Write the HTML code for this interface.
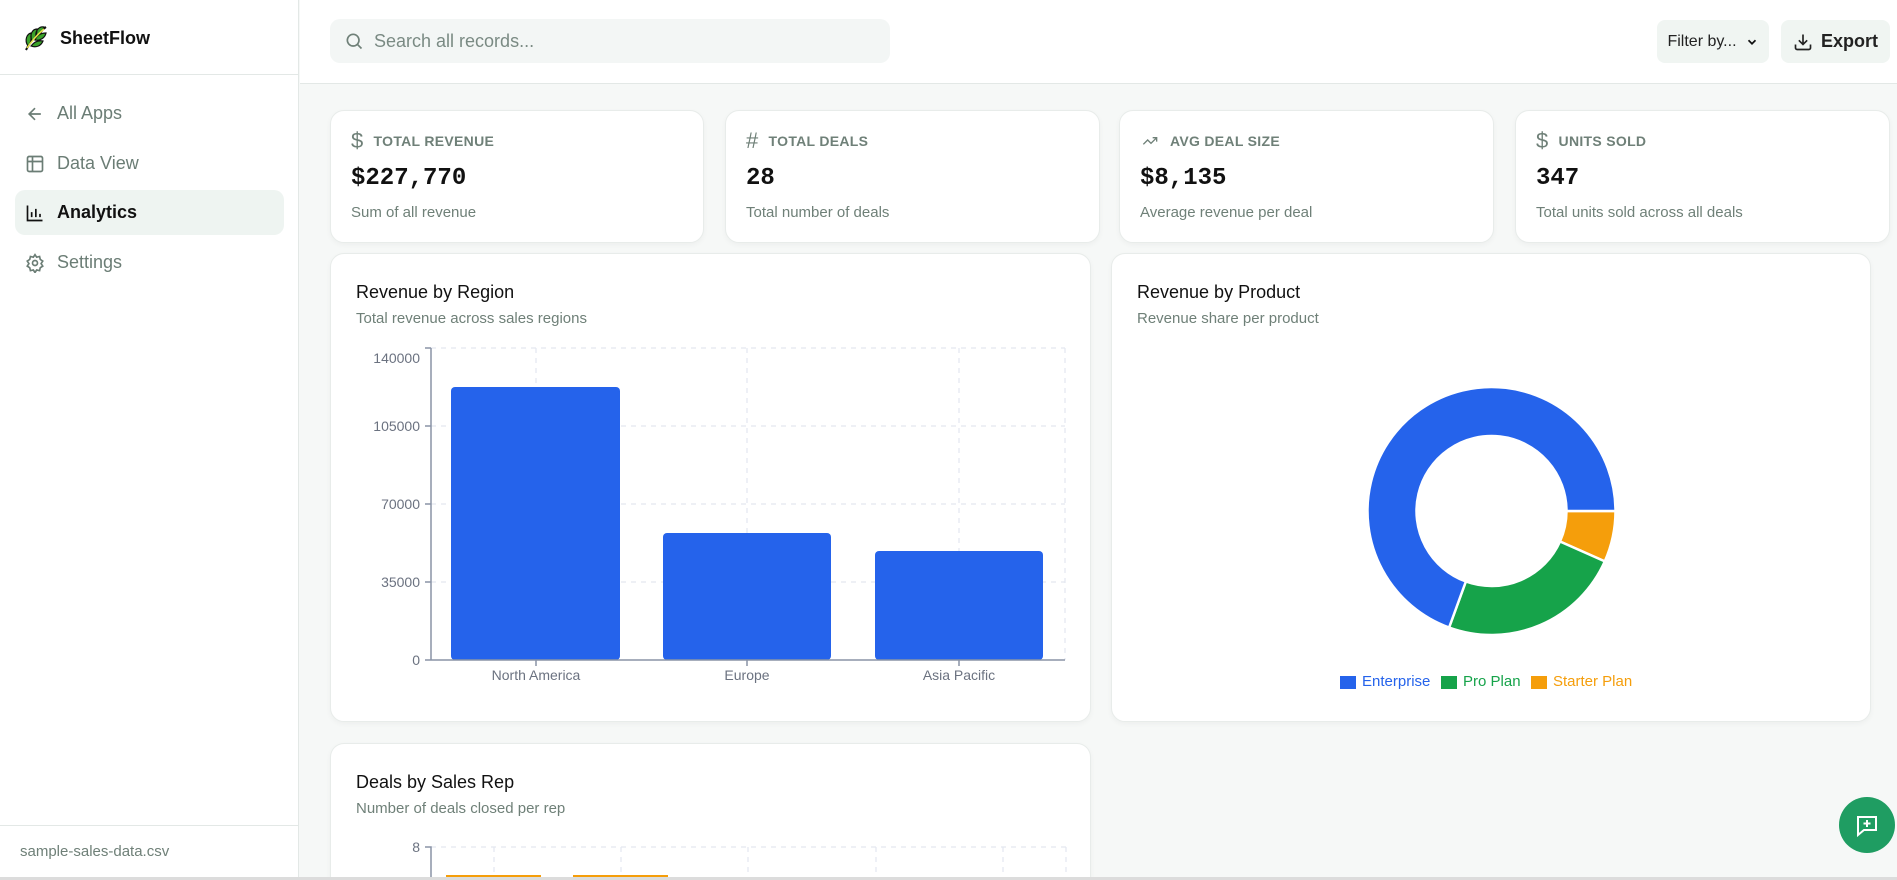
<!DOCTYPE html>
<html><head><meta charset="utf-8"><style>
*{box-sizing:border-box;margin:0;padding:0}
html{width:1897px;height:880px;overflow:hidden}
body{width:1897px;height:880px;overflow:hidden;font-family:"Liberation Sans",sans-serif;background:#f6f8f7;position:relative;color:#111}
.side{position:absolute;left:0;top:0;width:299px;height:880px;background:#fff;border-right:1px solid #e3e8e6}
.logo{position:absolute;left:22px;top:24px;display:flex;align-items:center;gap:10px;font-size:18px;font-weight:bold}
.sdiv{position:absolute;left:0;right:0;height:1px;background:#e3e8e6}
.nav{position:absolute;left:15px;width:269px;height:45px;border-radius:10px;display:flex;align-items:center;padding-left:10px;gap:12px;font-size:18px;color:#6b7d75}
.nav.act{background:#eef4f1;color:#111;font-weight:bold}
.top{position:absolute;left:300px;top:0;right:0;height:84px;background:#fff;border-bottom:1px solid #e3e8e6}
.search{position:absolute;left:330px;top:19px;width:560px;height:44px;border-radius:10px;background:#f3f6f5;display:flex;align-items:center;padding-left:14px;gap:10px;color:#7a8a83;font-size:18px}
.btn{position:absolute;top:20px;height:43px;border-radius:8px;background:#f0f5f2;display:flex;align-items:center;justify-content:center;gap:8px;font-size:16px}
.card{position:absolute;background:#fff;border-radius:14px;border:1px solid #e8ecea;box-shadow:0 2px 6px rgba(0,0,0,.04)}
.stat .lb{position:absolute;left:20px;top:18px;height:24px;display:flex;align-items:center;gap:10px;font-size:14px;font-weight:bold;color:#6f8078;letter-spacing:.3px}
.stat .v{position:absolute;left:20px;top:54px;font-family:"Liberation Mono",monospace;font-weight:bold;font-size:24px;color:#111}
.stat .d{position:absolute;left:20px;top:93px;font-size:15px;color:#6f8078}
.ct{position:absolute;left:25px;top:28px;font-size:18px;color:#111}
.cs{position:absolute;left:25px;top:56px;font-size:15px;color:#6f8078}
svg text{font-family:"Liberation Sans",sans-serif}
</style></head><body>
<div class="side">
 <div class="logo"><svg width="28" height="28" viewBox="0 0 28 28"><path d="M4 26 C8 18 14 10 24 3" stroke="#111" stroke-width="2" fill="none"/><path d="M6 22 C2 16 5 10 9 9 C9 14 10 18 6 22Z M10 17 C7 10 11 5 15 5 C15 10 14 14 10 17Z M14 12 C13 6 18 2 22 3 C21 7 19 10 14 12Z M9 22 C14 24 19 22 21 17 C16 16 12 18 9 22Z M13 16 C18 17 23 14 24 9 C19 9 15 11 13 16Z" fill="#3aa22a" stroke="#111" stroke-width="1.2"/><path d="M5 24 C9 18 15 11 22 5" stroke="#e6e04a" stroke-width="1.5" fill="none"/></svg>SheetFlow</div>
 <div class="sdiv" style="top:74px"></div>
 <div class="nav" style="top:91px"><svg width="20" height="20" viewBox="0 0 24 24" fill="none" stroke="#6b7d75" stroke-width="2"><path d="M19 12H5M12 19l-7-7 7-7"/></svg>All Apps</div>
 <div class="nav" style="top:141px"><svg width="20" height="20" viewBox="0 0 24 24" fill="none" stroke="#6b7d75" stroke-width="2"><rect x="3" y="3" width="18" height="18" rx="2"/><path d="M3 9h18M9 3v18"/></svg>Data View</div>
 <div class="nav act" style="top:190px"><svg width="20" height="20" viewBox="0 0 24 24" fill="none" stroke="#111" stroke-width="2"><path d="M3 3v18h18M8 17v-6M13 17V7M18 17v-4"/></svg>Analytics</div>
 <div class="nav" style="top:240px"><svg width="20" height="20" viewBox="0 0 24 24" fill="none" stroke="#6b7d75" stroke-width="2"><circle cx="12" cy="12" r="3"/><path d="M12 2l2 3 3.5-.8.8 3.5 3 2-2 3 2 3-3 2-.8 3.5-3.5-.8-2 3-2-3-3.5.8-.8-3.5-3-2 2-3-2-3 3-2 .8-3.5 3.5.8z"/></svg>Settings</div>
 <div class="sdiv" style="top:825px"></div>
 <div style="position:absolute;left:20px;top:843px;font-size:15px;color:#6f8078">sample-sales-data.csv</div>
</div>
<div class="top"></div>
<div class="search"><svg width="20" height="20" viewBox="0 0 24 24" fill="none" stroke="#6f8078" stroke-width="2"><circle cx="11" cy="11" r="7"/><path d="M21 21l-5-5"/></svg>Search all records...</div>
<div class="btn" style="left:1657px;width:112px;color:#222">Filter by... <svg width="14" height="14" viewBox="0 0 24 24" fill="none" stroke="#111" stroke-width="3"><path d="M6 9l6 6 6-6"/></svg></div>
<div class="btn" style="left:1781px;width:109px;font-size:18px;font-weight:bold;color:#222"><svg width="20" height="20" viewBox="0 0 24 24" fill="none" stroke="#222" stroke-width="2"><path d="M21 15v4a2 2 0 0 1-2 2H5a2 2 0 0 1-2-2v-4M7 10l5 5 5-5M12 15V3"/></svg>Export</div>

<div class="card stat" style="left:330px;top:110px;width:374px;height:133px"><div class="lb"><span style="font-size:22px;font-weight:normal">$</span>TOTAL REVENUE</div><div class="v">$227,770</div><div class="d">Sum of all revenue</div></div>
<div class="card stat" style="left:725px;top:110px;width:375px;height:133px"><div class="lb"><span style="font-size:22px;font-weight:normal">#</span>TOTAL DEALS</div><div class="v">28</div><div class="d">Total number of deals</div></div>
<div class="card stat" style="left:1119px;top:110px;width:375px;height:133px"><div class="lb"><svg width="20" height="16" viewBox="0 0 24 24" fill="none" stroke="#6f8078" stroke-width="2"><path d="M22 7l-8.5 8.5-5-5L2 17M16 7h6v6"/></svg>AVG DEAL SIZE</div><div class="v">$8,135</div><div class="d">Average revenue per deal</div></div>
<div class="card stat" style="left:1515px;top:110px;width:375px;height:133px"><div class="lb"><span style="font-size:22px;font-weight:normal">$</span>UNITS SOLD</div><div class="v">347</div><div class="d">Total units sold across all deals</div></div>

<div class="card" style="left:330px;top:253px;width:761px;height:469px"><div class="ct">Revenue by Region</div><div class="cs">Total revenue across sales regions</div></div>
<div class="card" style="left:1111px;top:253px;width:760px;height:469px"><div class="ct">Revenue by Product</div><div class="cs">Revenue share per product</div></div>
<div class="card" style="left:330px;top:743px;width:761px;height:137px;border-bottom:none;border-radius:14px 14px 0 0"><div class="ct">Deals by Sales Rep</div><div class="cs">Number of deals closed per rep</div></div>

<svg style="position:absolute;left:0;top:0" width="1897" height="880">
 <g stroke="#e3e7ef" stroke-dasharray="5 5" stroke-width="1.2">
  <path d="M431 348H1065M431 426H1065M431 504H1065M431 582H1065M536 348V660M747 348V660M959 348V660M1065 348V660"/>
  <path d="M431 847H1066M494 847V877M621 847V877M748 847V877M876 847V877M1003 847V877M1066 847V877"/>
 </g>
 <rect x="451" y="387" width="169" height="273" rx="4" fill="#2563eb"/>
 <rect x="663" y="533" width="168" height="127" rx="4" fill="#2563eb"/>
 <rect x="875" y="551" width="168" height="109" rx="4" fill="#2563eb"/>
 <g stroke="#8a94a6" stroke-width="1.5" fill="none">
  <path d="M431 348V660H1065M425 348H431M425 426H431M425 504H431M425 582H431M425 660H431M536 660V666M747 660V666M959 660V666"/>
  <path d="M425 847H431V880"/>
 </g>
 <g fill="#6b7280" font-size="14" text-anchor="end">
  <text x="420" y="363">140000</text><text x="420" y="431">105000</text><text x="420" y="509">70000</text><text x="420" y="587">35000</text><text x="420" y="665">0</text>
  <text x="420" y="852">8</text>
 </g>
 <g fill="#6b7280" font-size="14" text-anchor="middle"><text x="536" y="680">North America</text><text x="747" y="680">Europe</text><text x="959" y="680">Asia Pacific</text></g>
 <rect x="446" y="875" width="95" height="3" fill="#f59e0b"/><rect x="573" y="875" width="95" height="3" fill="#f59e0b"/>
 <g transform="translate(1366.5,386)" stroke="#fff" stroke-width="2.5">
  <path d="M249,125 A124,124 0 0 1 238.3,175.4 L193.5,155.5 A75,75 0 0 0 200,125 Z" fill="#f59e0b"/>
  <path d="M238.3,175.4 A124,124 0 0 1 82.6,241.5 L99.35,195.5 A75,75 0 0 0 193.5,155.5 Z" fill="#16a34a"/>
  <path d="M82.6,241.5 A124,124 0 1 1 249,125 L200,125 A75,75 0 1 0 99.35,195.5 Z" fill="#2563eb"/>
 </g>
 <rect x="1340" y="676" width="16" height="13" fill="#2563eb"/><text x="1362" y="686" font-size="15" fill="#2563eb">Enterprise</text>
 <rect x="1441" y="676" width="16" height="13" fill="#16a34a"/><text x="1463" y="686" font-size="15" fill="#16a34a">Pro Plan</text>
 <rect x="1531" y="676" width="16" height="13" fill="#f59e0b"/><text x="1553" y="686" font-size="15" fill="#f59e0b">Starter Plan</text>
 <rect x="0" y="877" width="1897" height="3" fill="#dcdcdc"/>
 <circle cx="1867" cy="825" r="28" fill="#1f9d62"/>
 <g transform="translate(1856,814)" fill="none" stroke="#fff" stroke-width="2"><path d="M2 3h18v13H8l-6 5z"/><path d="M11 6v7M7.5 9.5h7"/></g>
</svg>
</body></html>
